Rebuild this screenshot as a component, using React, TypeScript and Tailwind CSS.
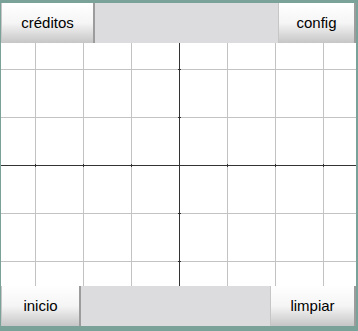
const W = 355;
const H = 243;
const CX = 178;
const CY = 122;
const STEP = 48;

function Grid() {
  const xs: number[] = [];
  for (let x = CX % STEP; x < W; x += STEP) xs.push(x);
  const ys: number[] = [];
  for (let y = CY % STEP; y < H; y += STEP) ys.push(y);

  return (
    <svg width={W} height={H} className="block" shapeRendering="crispEdges">
      <rect width={W} height={H} fill="#ffffff" />
      {xs.map((x) => (
        <line key={"v" + x} x1={x + 0.5} y1={0} x2={x + 0.5} y2={H} stroke="#c3c3c3" />
      ))}
      {ys.map((y) => (
        <line key={"h" + y} x1={0} y1={y + 0.5} x2={W} y2={y + 0.5} stroke="#c3c3c3" />
      ))}
      <line x1={CX + 0.5} y1={0} x2={CX + 0.5} y2={H} stroke="#333333" />
      <line x1={0} y1={CY + 0.5} x2={W} y2={CY + 0.5} stroke="#333333" />
      {/* small ticks where grid lines cross the axes */}
      {xs.map((x) => (
        <rect key={"tx" + x} x={x} y={CY - 1} width={1} height={3} fill="#333333" />
      ))}
      {ys.map((y) => (
        <rect key={"ty" + y} x={CX - 1} y={y} width={3} height={1} fill="#333333" />
      ))}
    </svg>
  );
}

function Btn({ label, className = "" }: { label: string; className?: string }) {
  return (
    <button
      className={`h-full shrink-0 flex items-center justify-center border-l border-l-[#c6c6c6] border-r-2 border-r-[#9c9c9c] bg-gradient-to-b from-white via-[#f5f5f5] to-[#c6c6c6] text-[15px] text-black ${className}`}
      style={{ fontFamily: '"Liberation Sans", Arial, sans-serif' }}
    >
      {label}
    </button>
  );
}

export default function App() {
  return (
    <div className="w-[358px] h-[331px] bg-[#7aa299] pt-[3px] pl-px pr-[2px] pb-[5px] flex flex-col">
      {/* top bar */}
      <div className="h-[40px] flex bg-[#dcdcde]">
        <Btn label="créditos" className="w-[94px]" />
        <div className="flex-1" />
        <Btn label="config" className="w-[78px]" />
      </div>

      {/* canvas */}
      <div className="h-[243px] bg-white">
        <Grid />
      </div>

      {/* bottom bar */}
      <div className="h-[40px] flex bg-[#dcdcde]">
        <Btn label="inicio" className="w-[80px]" />
        <div className="flex-1" />
        <Btn label="limpiar" className="w-[86px]" />
      </div>
    </div>
  );
}
